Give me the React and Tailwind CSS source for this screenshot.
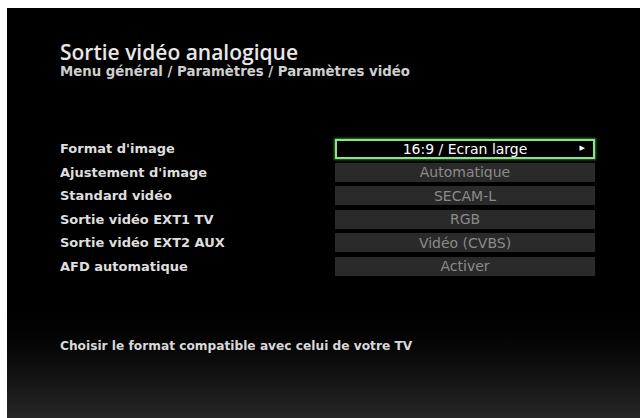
import React from "react";

const rows = [
  { label: "Format d'image", value: "16:9 / Ecran large", active: true },
  { label: "Ajustement d'image", value: "Automatique" },
  { label: "Standard vidéo", value: "SECAM-L" },
  { label: "Sortie vidéo EXT1 TV", value: "RGB" },
  { label: "Sortie vidéo EXT2 AUX", value: "Vidéo (CVBS)" },
  { label: "AFD automatique", value: "Activer" },
];

function SettingRow({ row }) {
  return (
    <div className="flex items-center h-[19px]">
      <div className="w-[275px] font-['DejaVu_Sans',sans-serif] text-[13px] font-bold text-[#dedede] leading-none">
        {row.label}
      </div>
      {row.active ? (
        <div className="relative w-[260px] h-[20px] flex items-center justify-center border-2 border-[#8ee28e] bg-black shadow-[0_0_2px_1px_#2a7a2a] font-['DejaVu_Sans',sans-serif] text-[14px] text-white leading-none">
          {row.value}
          <span className="absolute right-[8px] top-[4px] text-[7px]">▶</span>
        </div>
      ) : (
        <div className="w-[260px] h-[19px] flex items-center justify-center bg-[#2a2a2a] font-['DejaVu_Sans',sans-serif] text-[14px] text-[#8a8a8a] leading-none">
          {row.value}
        </div>
      )}
    </div>
  );
}

export default function App() {
  return (
    <div className="w-[643px] h-[418px] bg-white pl-[7px] pt-[8px] pr-[3px] overflow-hidden font-['Open_Sans','DejaVu_Sans',sans-serif]">
      <div className="h-full bg-gradient-to-b from-black from-[68%] to-[#272727] pl-[53px] pt-[31px]">
        <h1 className="text-[21px] font-semibold text-[#e8e8e8] leading-[26px]">Sortie vidéo analogique</h1>
        <p className="font-['DejaVu_Sans',sans-serif] text-[13.3px] font-bold text-[#cfcfcf] leading-[14px]">
          Menu général / Paramètres / Paramètres vidéo
        </p>
        <div className="mt-[60px] flex flex-col gap-[4.5px]">
          {rows.map((r) => (
            <SettingRow key={r.label} row={r} />
          ))}
        </div>
        <p className="mt-[63px] font-['DejaVu_Sans',sans-serif] text-[12.2px] font-bold text-[#d8d8d8] leading-[14px]">
          Choisir le format compatible avec celui de votre TV
        </p>
      </div>
    </div>
  );
}
